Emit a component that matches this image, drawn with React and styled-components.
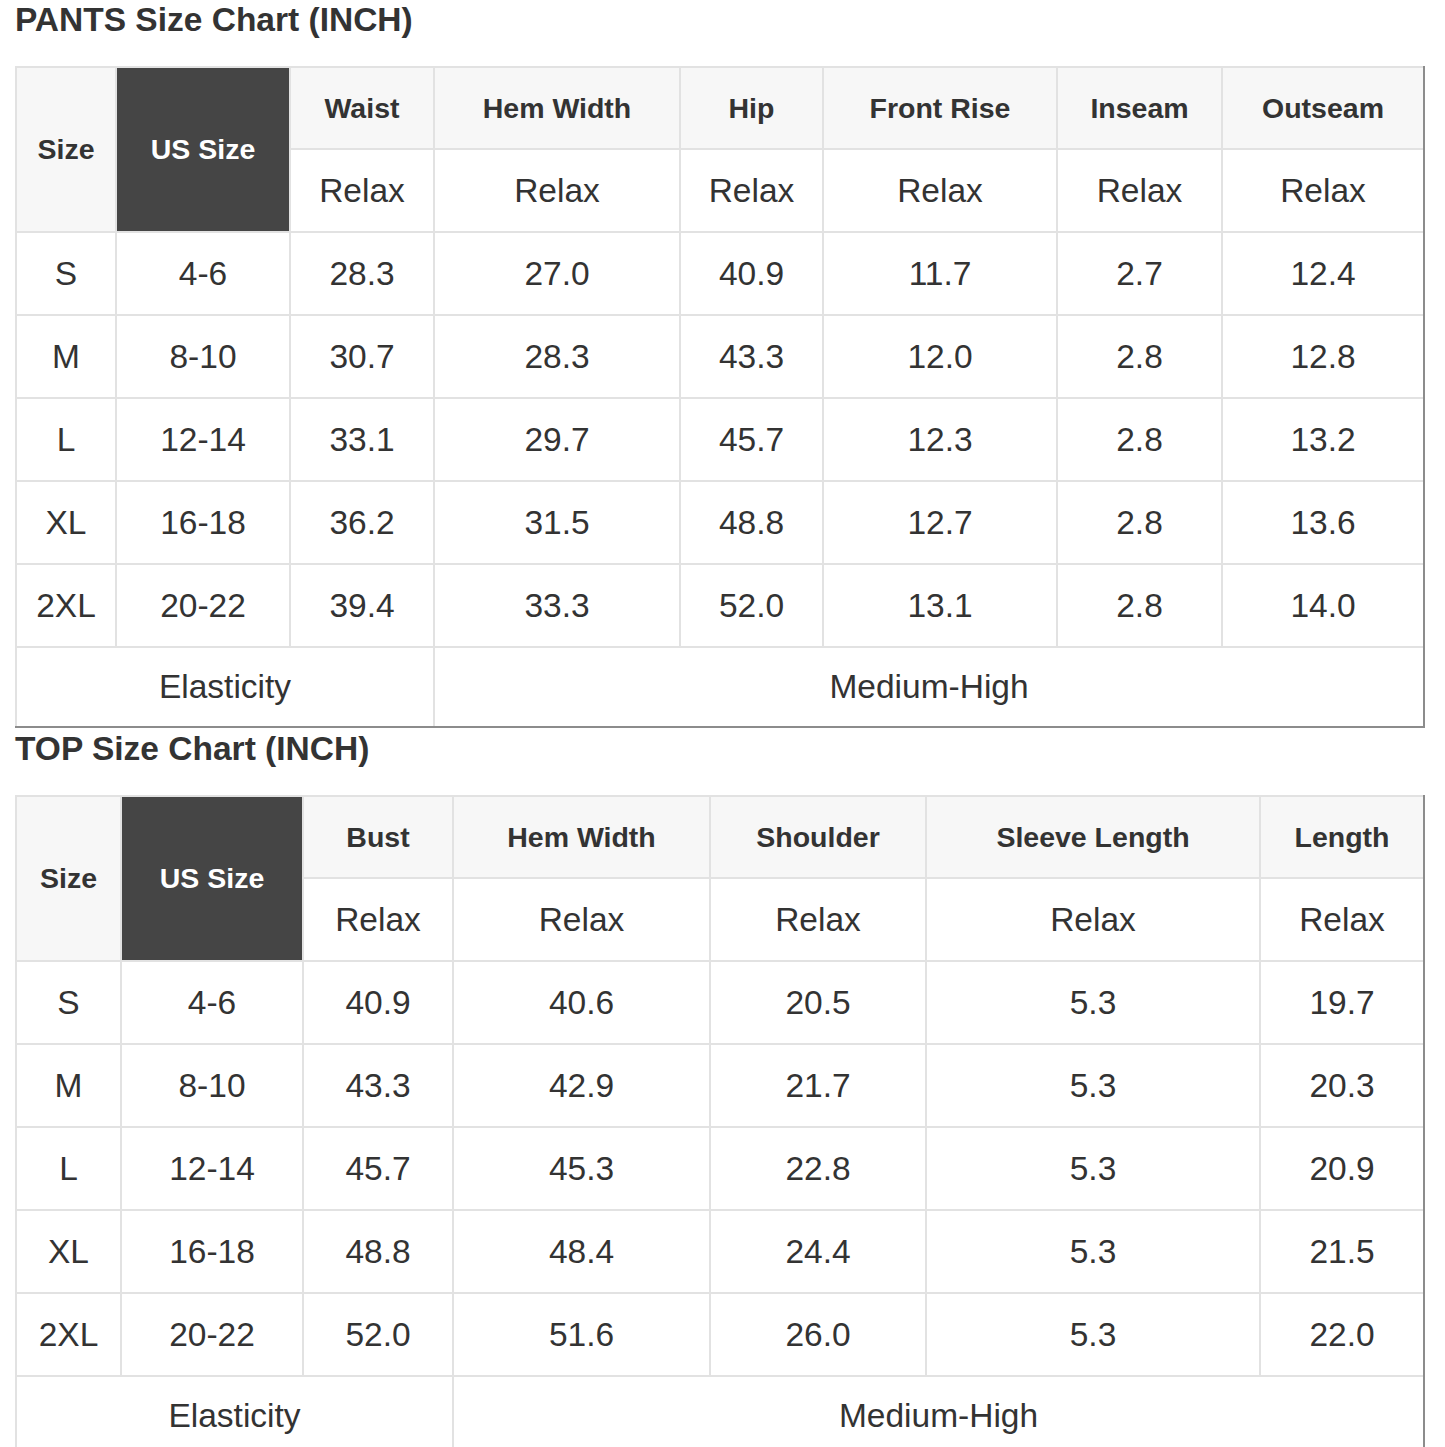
import React from "react";
import styled, { createGlobalStyle } from "styled-components";

const GlobalStyle = createGlobalStyle`
  html, body {
    margin: 0;
    padding: 0;
    background: #ffffff;
  }
  body {
    font-family: "Liberation Sans", Arial, Helvetica, sans-serif;
    color: #333333;
  }
`;

const Page = styled.div`
  padding: 0 0 0 15px;
  display: flex;
  flex-direction: column;
`;

const Title = styled.h2`
  margin: 0;
  box-sizing: border-box;
  height: 66px;
  padding-top: 0;
  font-size: 33.5px;
  line-height: 40px;
  font-weight: 700;
  color: #333333;
`;

const Grid = styled.div`
  display: grid;
  width: max-content;
  grid-template-columns: ${(p) => p.$cols.map((c) => `${c}px`).join(" ")};
  grid-template-rows: 82px 83px repeat(5, 83px) 80px;
  border-right: 2px solid #8c8c8c;
  border-bottom: 2px solid #8c8c8c;
  margin-bottom: 1px;
`;

const Cell = styled.div`
  box-sizing: border-box;
  border-top: 2px solid #e2e2e2;
  border-left: 2px solid #e2e2e2;
  display: flex;
  align-items: center;
  justify-content: center;
  text-align: center;
  font-size: 33.5px;
  color: #333333;
  background: #ffffff;
  grid-column: ${(p) => p.$colSpan || "auto"};
  grid-row: ${(p) => (p.$rowSpan ? `span ${p.$rowSpan}` : "auto")};
`;

const HeadCell = styled(Cell)`
  font-size: 28.5px;
  font-weight: 700;
  background: ${(p) => (p.$dark ? "#454545" : "#f7f7f7")};
  color: ${(p) => (p.$dark ? "#ffffff" : "#333333")};
`;

const SizeChart = ({ title, cols, headers, rows }) => (
  <>
    <Title>{title}</Title>
    <Grid $cols={cols}>
      <HeadCell $rowSpan={2}>Size</HeadCell>
      <HeadCell $rowSpan={2} $dark>
        US Size
      </HeadCell>
      {headers.map((h) => (
        <HeadCell key={h}>{h}</HeadCell>
      ))}
      {headers.map((h) => (
        <Cell key={h + "-r"}>Relax</Cell>
      ))}
      {rows.map((r) =>
        r.map((v, i) => <Cell key={r[0] + "-" + i}>{v}</Cell>)
      )}
      <Cell $colSpan="span 3">Elasticity</Cell>
      <Cell $colSpan="4 / -1">Medium-High</Cell>
    </Grid>
  </>
);

const pants = {
  title: "PANTS Size Chart (INCH)",
  cols: [100, 174, 144, 246, 143, 234, 165, 202],
  headers: ["Waist", "Hem Width", "Hip", "Front Rise", "Inseam", "Outseam"],
  rows: [
    ["S", "4-6", "28.3", "27.0", "40.9", "11.7", "2.7", "12.4"],
    ["M", "8-10", "30.7", "28.3", "43.3", "12.0", "2.8", "12.8"],
    ["L", "12-14", "33.1", "29.7", "45.7", "12.3", "2.8", "13.2"],
    ["XL", "16-18", "36.2", "31.5", "48.8", "12.7", "2.8", "13.6"],
    ["2XL", "20-22", "39.4", "33.3", "52.0", "13.1", "2.8", "14.0"],
  ],
};

const top = {
  title: "TOP Size Chart (INCH)",
  cols: [105, 182, 150, 257, 216, 334, 164],
  headers: ["Bust", "Hem Width", "Shoulder", "Sleeve Length", "Length"],
  rows: [
    ["S", "4-6", "40.9", "40.6", "20.5", "5.3", "19.7"],
    ["M", "8-10", "43.3", "42.9", "21.7", "5.3", "20.3"],
    ["L", "12-14", "45.7", "45.3", "22.8", "5.3", "20.9"],
    ["XL", "16-18", "48.8", "48.4", "24.4", "5.3", "21.5"],
    ["2XL", "20-22", "52.0", "51.6", "26.0", "5.3", "22.0"],
  ],
};

export default function App() {
  return (
    <>
      <GlobalStyle />
      <Page>
        <SizeChart {...pants} />
        <SizeChart {...top} />
      </Page>
    </>
  );
}
